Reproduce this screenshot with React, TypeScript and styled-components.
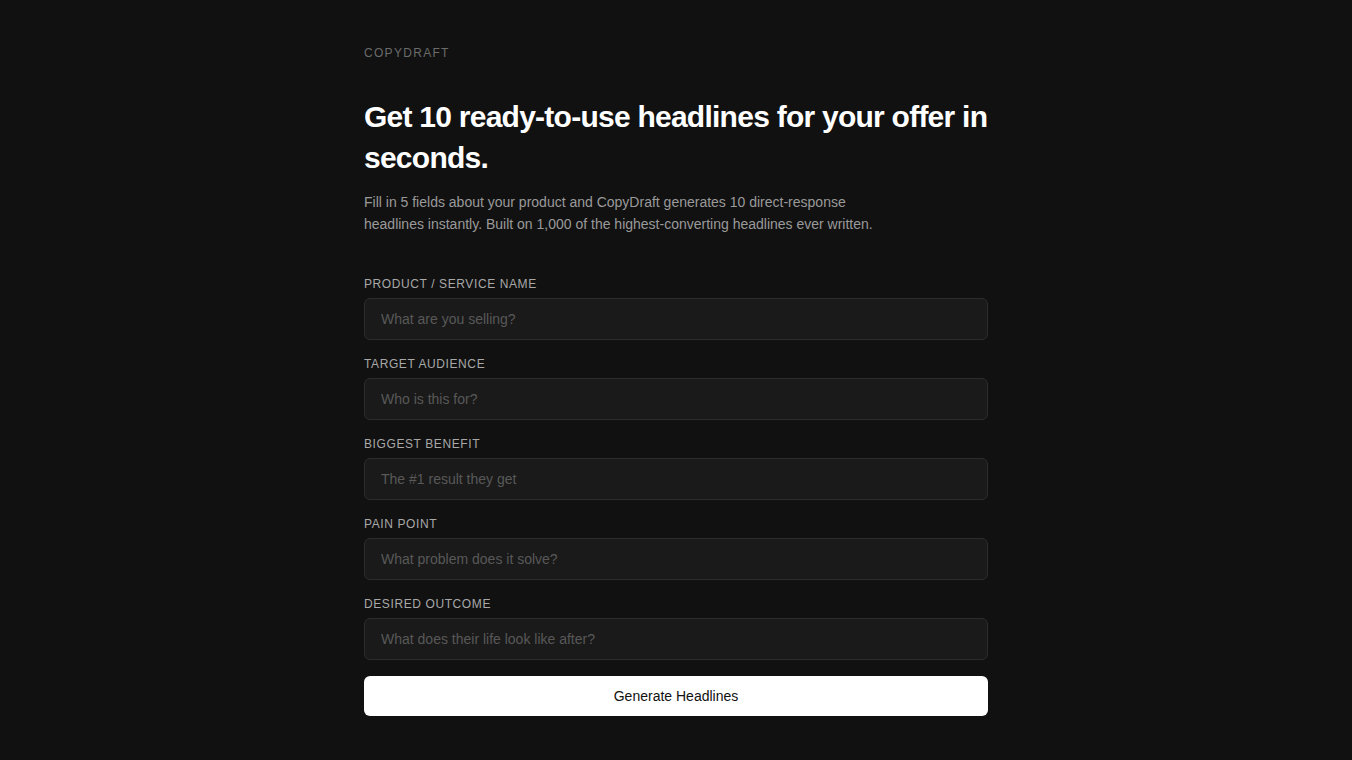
import React from "react";
import styled, { createGlobalStyle } from "styled-components";

const Global = createGlobalStyle`
  html, body { margin: 0; padding: 0; background: #111111; }
  body { font-family: "Liberation Sans", Arial, sans-serif; color: #fff; }
  * { box-sizing: border-box; }
`;

const Page = styled.main`
  width: 624px;
  margin: 0 auto;
  padding: 44px 0 40px;
`;

const Brand = styled.div`
  font-size: 12px;
  line-height: 18px;
  letter-spacing: 1.3px;
  color: #6b6b6b;
  text-transform: uppercase;
`;

const Title = styled.h1`
  margin: 34px 0 0;
  font-size: 30px;
  line-height: 41px;
  font-weight: 700;
  letter-spacing: -0.75px;
  color: #ffffff;
`;

const Lead = styled.p`
  margin: 13px 0 0;
  max-width: 520px;
  font-size: 14px;
  line-height: 22px;
  color: #9a9a9a;
`;

const Form = styled.form`
  margin-top: 41px;
  display: flex;
  flex-direction: column;
  gap: 16px;
`;

const Field = styled.label`
  display: flex;
  flex-direction: column;
  gap: 6px;
`;

const LabelText = styled.span`
  font-size: 12px;
  line-height: 16px;
  letter-spacing: 0.6px;
  color: #a8a8a8;
  text-transform: uppercase;
`;

const Input = styled.input`
  height: 42px;
  padding: 0 16px;
  border: 1px solid #2c2c2c;
  border-radius: 6px;
  background: #1a1a1a;
  color: #eee;
  font-family: inherit;
  font-size: 14px;
  outline: none;
  &::placeholder { color: #585858; }
`;

const Button = styled.button`
  height: 40px;
  border: none;
  border-radius: 6px;
  background: #ffffff;
  color: #111111;
  font-family: inherit;
  font-size: 14px;
  cursor: pointer;
`;

const fields = [
  { label: "Product / Service Name", placeholder: "What are you selling?" },
  { label: "Target Audience", placeholder: "Who is this for?" },
  { label: "Biggest Benefit", placeholder: "The #1 result they get" },
  { label: "Pain Point", placeholder: "What problem does it solve?" },
  { label: "Desired Outcome", placeholder: "What does their life look like after?" },
];

export default function App() {
  return (
    <>
      <Global />
      <Page>
        <Brand>CopyDraft</Brand>
        <Title>Get 10 ready-to-use headlines for your offer in seconds.</Title>
        <Lead>
          Fill in 5 fields about your product and CopyDraft generates 10 direct-response
          headlines instantly. Built on 1,000 of the highest-converting headlines ever written.
        </Lead>
        <Form onSubmit={(e) => e.preventDefault()}>
          {fields.map((f) => (
            <Field key={f.label}>
              <LabelText>{f.label}</LabelText>
              <Input placeholder={f.placeholder} />
            </Field>
          ))}
          <Button type="submit">Generate Headlines</Button>
        </Form>
      </Page>
    </>
  );
}
